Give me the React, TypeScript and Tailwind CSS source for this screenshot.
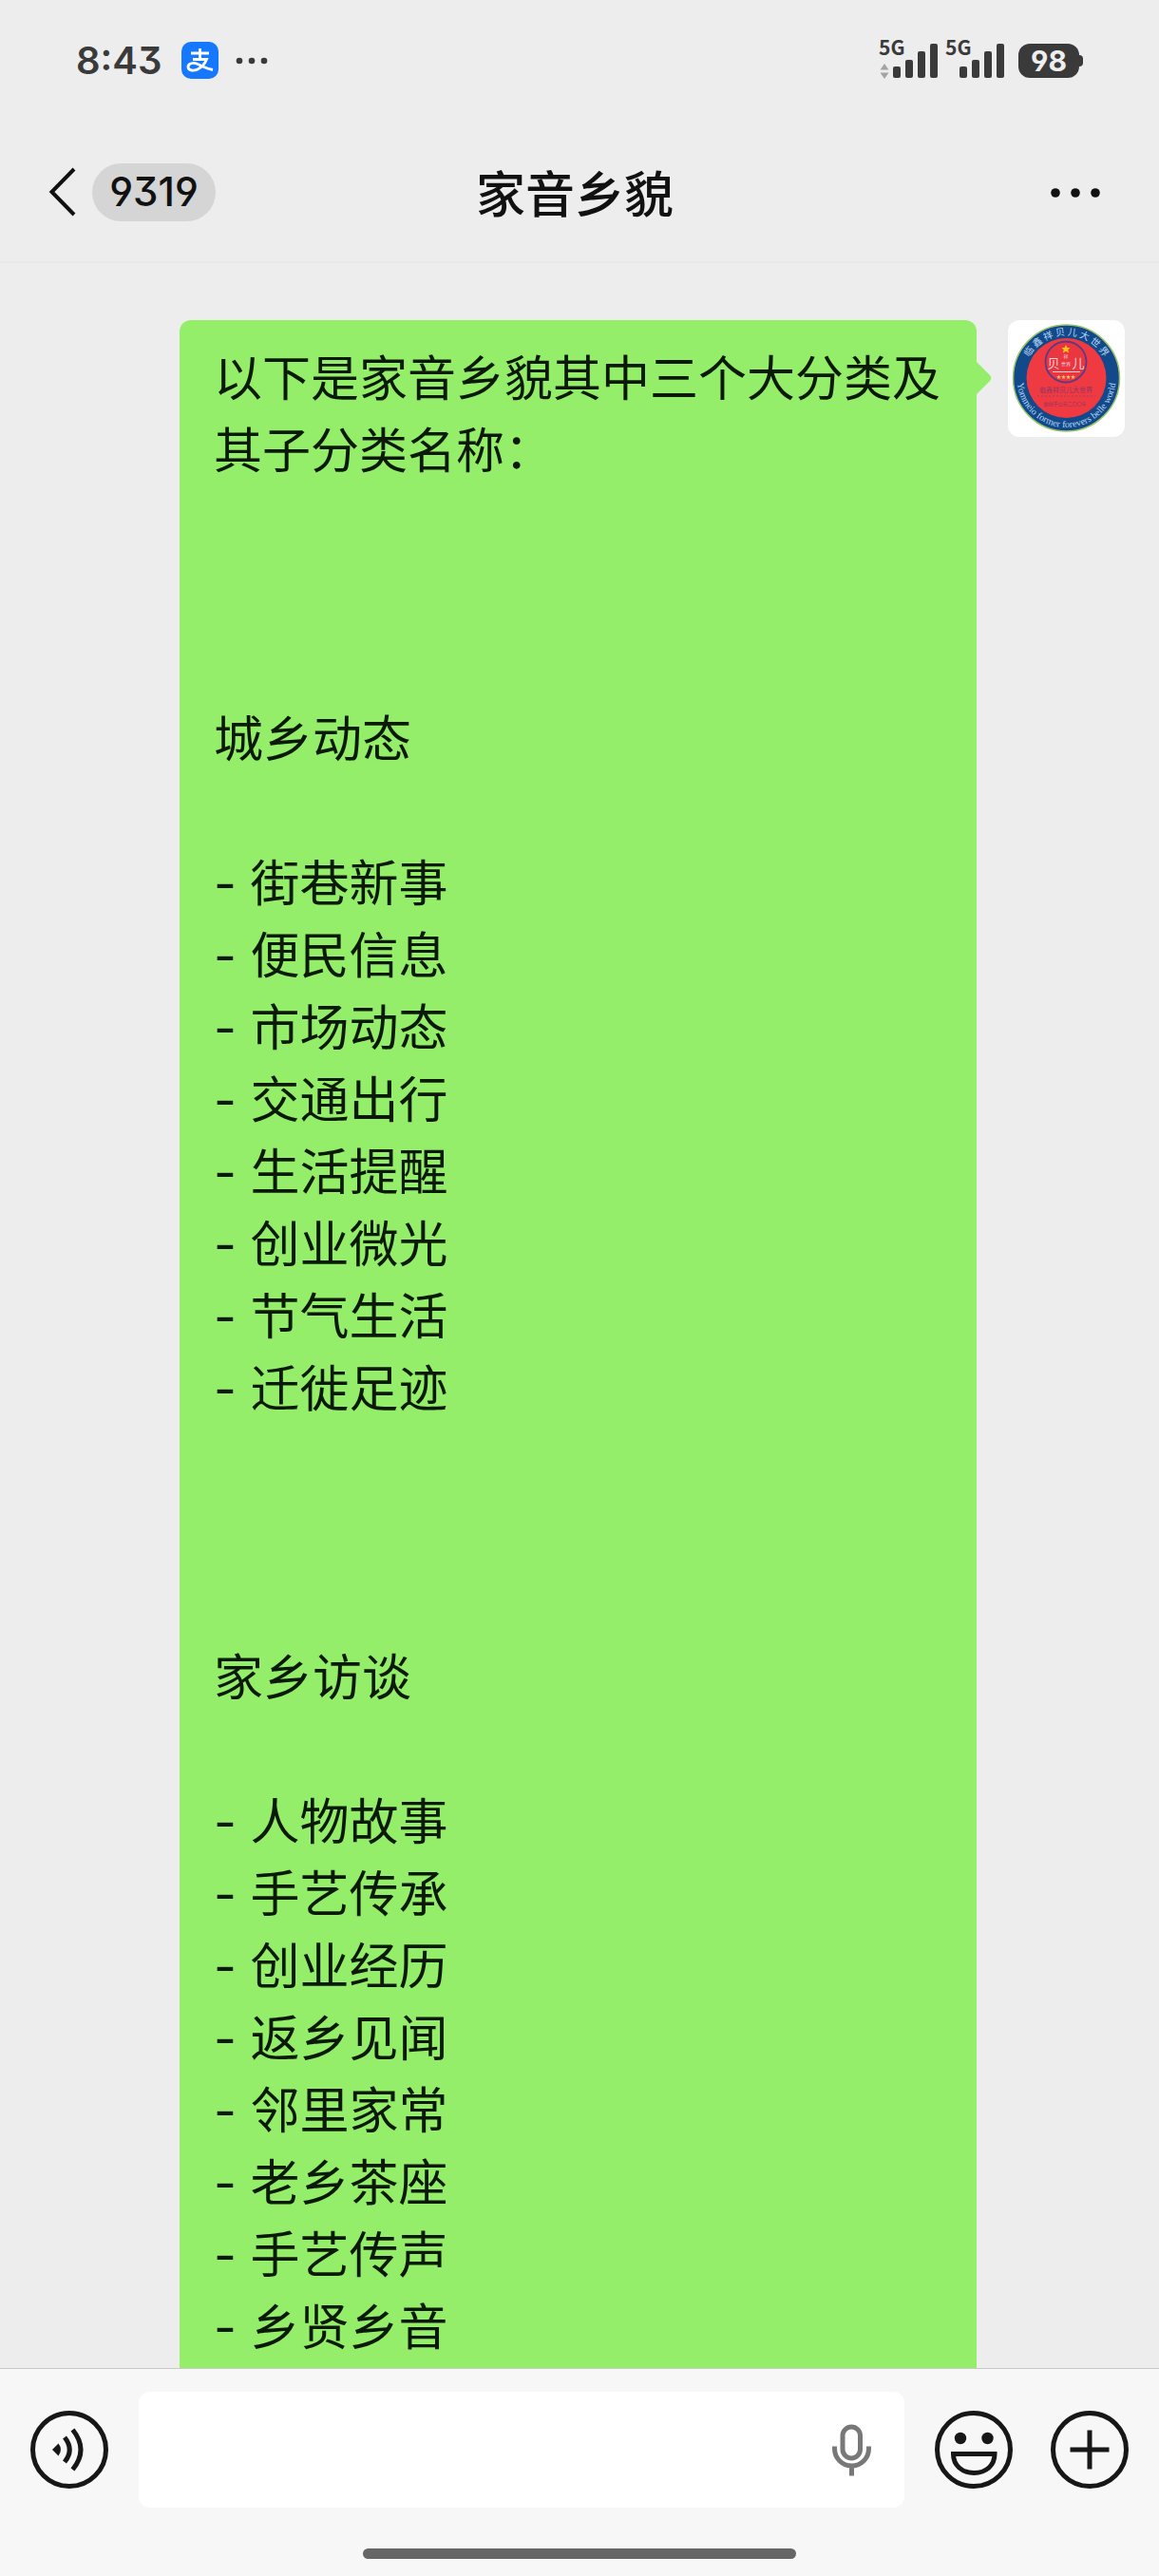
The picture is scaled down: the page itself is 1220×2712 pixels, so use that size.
import React from "react";

const latin = "font-['Inter','Noto_Sans_CJK_SC',sans-serif] [font-feature-settings:'cv09','cv04']";

const intro = "以下是家音乡貌其中三个大分类及其子分类名称：";

const lines = [
  "",
  "",
  "",
  "城乡动态",
  "",
  "- 街巷新事",
  "- 便民信息",
  "- 市场动态",
  "- 交通出行",
  "- 生活提醒",
  "- 创业微光",
  "- 节气生活",
  "- 迁徙足迹",
  "",
  "",
  "",
  "家乡访谈",
  "",
  "- 人物故事",
  "- 手艺传承",
  "- 创业经历",
  "- 返乡见闻",
  "- 邻里家常",
  "- 老乡茶座",
  "- 手艺传声",
  "- 乡贤乡音",
];

function Signal({ data }: { data?: boolean }) {
  return (
    <svg className="overflow-visible" width="63" height="42" viewBox="0 0 63 42" fill="#3a3a3a" aria-hidden="true">
      <text x="0" y="17" fontSize="21" fontWeight="700" fontFamily="'Noto Sans CJK SC', sans-serif">5G</text>
      {data && <path d="M6 26l4.500 6.500h-9zM6 42l4.500-6.500h-9z" fill="#a3a3a3" />}
      <rect x="15" y="29" width="8" height="12" rx="2" />
      <rect x="28" y="22" width="8" height="19" rx="2" />
      <rect x="41" y="13" width="8" height="28" rx="2" />
      <rect x="54" y="5" width="8" height="36" rx="2" />
    </svg>
  );
}

function AppBadge() {
  return (
    <svg className="ml-5" width="39" height="39" viewBox="0 0 39 39" fill="none" aria-hidden="true">
      <rect width="39" height="39" rx="10" fill="#1677ff" />
      <path d="M10 12h19M19.500 7v12M12 18.500h14.500c-2 5-5.500 8.500-9.500 10.500-4 2-10 1.500-10-2.500 0-4 5.500-5 10-3 5 2 9 5 16 6" stroke="#fff" strokeWidth="2.800" />
    </svg>
  );
}

function StatusBar() {
  return (
    <div className="flex h-[127px] items-center pl-20 pr-20 text-[#3a3a3a]">
      <span className={`text-[40px] font-semibold leading-none ${latin}`}>8:43</span>
      <AppBadge />
      <svg className="ml-[18px]" width="34" height="8" viewBox="0 0 34 8" fill="#3a3a3a" aria-hidden="true">
        <circle cx="4" cy="4" r="3.300" />
        <circle cx="17" cy="4" r="3.300" />
        <circle cx="30" cy="4" r="3.300" />
      </svg>
      <div className="ml-auto flex items-center">
        <div className="flex gap-[7px] pb-1">
          <Signal data />
          <Signal />
        </div>
        <div className="ml-3.5 flex items-center">
          <span className={`flex h-9 w-16 items-center justify-center rounded-xl bg-[#3a3a3a] text-[30px] font-bold leading-none text-[#eee] ${latin}`}>
            98
          </span>
          <span className="h-3 w-1 rounded-r-sm bg-[#3a3a3a]" />
        </div>
      </div>
    </div>
  );
}

function NavBar() {
  return (
    <header className="grid h-[150px] grid-cols-[1fr_auto_1fr] items-center border-b-2 border-[#e8e8e8] pl-[51px] pr-[61px] pt-0.5">
      <button type="button" className="flex items-center justify-self-start" aria-label="返回，9319 条未读">
        <svg width="29" height="52" viewBox="0 0 29 52" fill="none" stroke="#111" strokeWidth="4" aria-hidden="true">
          <path d="M27 2L3.500 26 27 50" />
        </svg>
        <span className={`ml-[17px] flex h-[61px] w-[130px] items-center justify-center rounded-full bg-[#d5d5d5] text-[42px] font-medium leading-none text-[#111] ${latin}`}>
          9319
        </span>
      </button>
      <h1 className="text-[52px] font-medium leading-none text-[#111]">家音乡貌</h1>
      <button type="button" className="justify-self-end" aria-label="更多">
        <svg width="54" height="12" viewBox="0 0 54 12" fill="#111" aria-hidden="true">
          <circle cx="6" cy="7" r="4.800" />
          <circle cx="27" cy="7" r="4.800" />
          <circle cx="48" cy="7" r="4.800" />
        </svg>
      </button>
    </header>
  );
}

function Avatar() {
  return (
    <svg className="size-[123px] shrink-0 rounded-xl bg-white" viewBox="0 0 123 123" role="img" aria-label="头像">
      <defs>
        <path id="ring-top" d="M16.500 61a45 45 0 0 1 90 0" />
        <path id="ring-bottom" d="M9.500 61a52 52 0 0 0 104 0" />
      </defs>
      <circle cx="61.500" cy="61" r="56" fill="#12498a" stroke="#9cc46a" strokeWidth="1.500" />
      <circle cx="61.500" cy="61" r="42" fill="#f03a42" />
      <g fill="#b9d8f5" textAnchor="middle">
        <text fontSize="10" fontFamily="'Noto Sans CJK SC', sans-serif">
          <textPath href="#ring-top" startOffset="50%">临 鑫 祥 贝 儿 大 世 界</textPath>
        </text>
        <text fontSize="10" fontFamily="'Liberation Serif', serif">
          <textPath href="#ring-bottom" startOffset="50%">Yommeio former forevers belle world</textPath>
        </text>
      </g>
      <circle cx="61" cy="44" r="21.500" fill="#e9363f" stroke="#5b3a86" strokeWidth="1.800" />
      <path d="M61 26l1.500 3h3l-2.200 2.200.8 3.300-3.100-1.700-3.100 1.700.8-3.300L56.500 29h3z" fill="#ffc21a" />
      <g textAnchor="middle" fontFamily="'Noto Sans CJK SC', sans-serif">
        <text x="48" y="50" fontSize="13" fill="#f8d5dd">贝</text>
        <text x="74" y="50" fontSize="13" fill="#f8d5dd">儿</text>
        <text x="61" y="40" fontSize="5" fill="#f8d5dd">祥</text>
        <text x="61" y="48" fontSize="5" fill="#f8d5dd">世界</text>
        <text x="61" y="61" fontSize="5" fill="#ffc96a">★★★★</text>
        <text x="61" y="76" fontSize="7" fill="#8e3563">临鑫祥贝儿大世界</text>
        <text x="60" y="90" fontSize="5" fill="#8e3563">始创于公元二〇〇年</text>
      </g>
      <path d="M47 54.500h29" stroke="#f8d5dd" />
      <path d="M31 80h61" stroke="#a83a5c" strokeDasharray="2 2" />
    </svg>
  );
}

function Message() {
  return (
    <div className="flex items-start pl-[189px] pr-9">
      <div className="relative min-w-0 flex-1 rounded-xl bg-[#95ee6a] px-9 py-6 font-['Inter','Noto_Sans_CJK_SC',sans-serif] leading-[76px] text-[#0a1a06]">
        <p className="text-[51px] leading-[76px]">{intro}</p>
        {lines.map((line, i) => (
          <p key={i} className="min-h-[76px] text-[52px] leading-[76px]">
            {line}
          </p>
        ))}
        <svg className="absolute -right-4 top-[42px]" width="17" height="38" viewBox="0 0 17 38" fill="#95ee6a" aria-hidden="true">
          <path d="M0 1l15 15q2.500 3 0 6L0 37z" />
        </svg>
      </div>
      <div className="ml-[33px]">
        <Avatar />
      </div>
    </div>
  );
}

function Composer() {
  return (
    <footer className="shrink-0 border-t border-[#c8c8c8] bg-[#f7f7f7] pt-6">
      <div className="flex items-center pl-8 pr-8">
        <button type="button" aria-label="语音输入">
          <svg width="82" height="82" viewBox="0 0 82 82" fill="none" stroke="#171717" strokeWidth="5" aria-hidden="true">
            <circle cx="41" cy="41" r="38.500" />
            <path d="M23 41l6.500-6.500a10 10 0 0 1 0 13z" fill="#171717" stroke="none" />
            <path d="M36 28q10.500 13 0 26M44.500 20q17 21 0 42" />
          </svg>
        </button>
        <div className="relative ml-8 min-w-0 flex-1">
          <input aria-label="消息" className="block h-[122px] w-full rounded-xl bg-white pl-6 pr-28 text-[51px] outline-none" />
          <button type="button" aria-label="语音转文字" className="absolute right-[34px] top-[34px]">
            <svg width="43" height="55" viewBox="0 0 43 55" fill="none" stroke="#787878" strokeWidth="5" aria-hidden="true">
              <rect x="12" y="3" width="18.500" height="33" rx="9.250" />
              <path d="M3.500 23.500v2.500a18 18 0 0 0 36 0v-2.500M21.500 44v10.500" />
            </svg>
          </button>
        </div>
        <button type="button" aria-label="表情" className="ml-8">
          <svg width="82" height="82" viewBox="0 0 82 82" fill="none" stroke="#171717" strokeWidth="5" aria-hidden="true">
            <circle cx="41" cy="41" r="38.500" />
            <circle cx="27" cy="29" r="6.200" fill="#171717" stroke="none" />
            <circle cx="55.500" cy="29" r="6.200" fill="#171717" stroke="none" />
            <path d="M19.500 45.500h43.500c0 12-9 20-21.700 20s-21.800-8-21.800-20z" />
          </svg>
        </button>
        <button type="button" aria-label="更多功能" className="ml-10">
          <svg width="82" height="82" viewBox="0 0 82 82" fill="none" stroke="#171717" strokeWidth="5" aria-hidden="true">
            <circle cx="41" cy="41" r="38.500" />
            <path d="M41 20.500v41M20.500 41h41" />
          </svg>
        </button>
      </div>
      <div className="flex justify-center pb-[18px] pt-[43px]">
        <div className="h-[11px] w-[456px] rounded-full bg-[#666]" />
      </div>
    </footer>
  );
}

export default function App() {
  return (
    <div className="flex h-screen flex-col overflow-hidden bg-[#ededed] font-['Noto_Sans_CJK_SC',sans-serif]" lang="zh-CN">
      <StatusBar />
      <NavBar />
      <main className="min-h-0 flex-1 overflow-hidden pt-[60px]">
        <Message />
      </main>
      <Composer />
    </div>
  );
}
